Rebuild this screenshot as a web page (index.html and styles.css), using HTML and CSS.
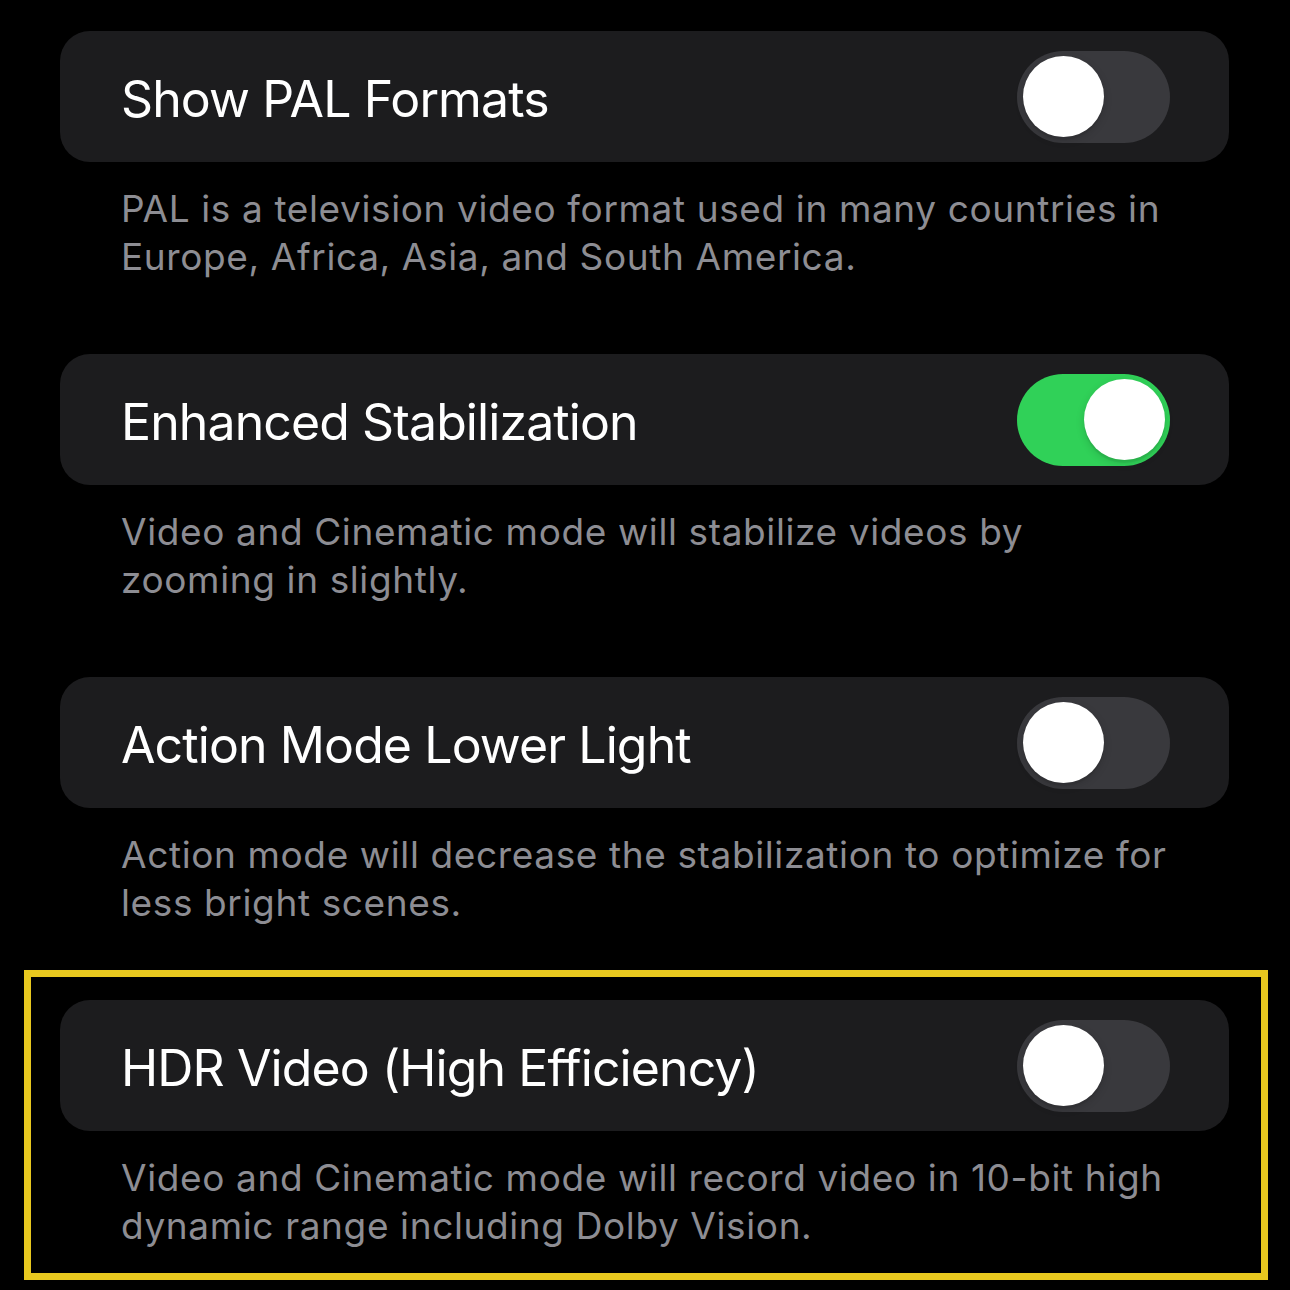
FILE: index.html
```html
<!DOCTYPE html>
<html>
<head>
    <title>Camera Video Settings</title>
    <link rel="stylesheet" href="styles.css">
</head>
<body>
    <div class="settings">
        <div class="section">
            <div class="card">
                <span class="label">Show PAL Formats</span>
                <div class="toggle"><div class="knob"></div></div>
            </div>
            <p class="footer">PAL is a television video format used in many countries in Europe, Africa, Asia, and South America.</p>
        </div>

        <div class="section">
            <div class="card">
                <span class="label">Enhanced Stabilization</span>
                <div class="toggle on"><div class="knob"></div></div>
            </div>
            <p class="footer">Video and Cinematic mode will stabilize videos by zooming in slightly.</p>
        </div>

        <div class="section">
            <div class="card">
                <span class="label">Action Mode Lower Light</span>
                <div class="toggle"><div class="knob"></div></div>
            </div>
            <p class="footer">Action mode will decrease the stabilization to optimize for less bright scenes.</p>
        </div>

        <div class="section highlight">
            <div class="card">
                <span class="label">HDR Video (High Efficiency)</span>
                <div class="toggle"><div class="knob"></div></div>
            </div>
            <p class="footer">Video and Cinematic mode will record video in 10-bit high dynamic range including Dolby Vision.</p>
        </div>
    </div>
</body>
</html>
```

FILE: styles.css
```css
body { margin: 0; background: #000; font-family: Inter, "Noto Sans", sans-serif; -webkit-font-smoothing: antialiased; }
.settings { width: 1290px; height: 1290px; padding: 31px 61px 0 60px; box-sizing: border-box; overflow: hidden; }
.section { position: relative; margin-bottom: 73px; }
.card { display: flex; align-items: center; justify-content: space-between; height: 131px; padding: 0 59px 0 61px; background: #1c1c1e; border-radius: 30px; box-sizing: border-box; }
.label { color: #fff; font-size: 50px; letter-spacing: -0.9px; padding-top: 4px; }
.footer { margin: 0; padding: 23px 54px 0 61px; color: #8d8d93; font-size: 37px; line-height: 48px; letter-spacing: 0.62px; }

.toggle { width: 153px; height: 92px; padding: 5.5px; box-sizing: border-box; border-radius: 46px; background: #39393d; display: flex; }
.toggle.on { background: #30d158; justify-content: flex-end; }
.knob { width: 81px; height: 81px; border-radius: 50%; background: #fff; box-shadow: 0 3px 8px rgba(0,0,0,0.15), 0 3px 1px rgba(0,0,0,0.06); }

.highlight::after { content: ""; position: absolute; top: -30px; left: -36px; right: -39px; bottom: -30px; border: 7px solid #e8c81f; pointer-events: none; }
```
